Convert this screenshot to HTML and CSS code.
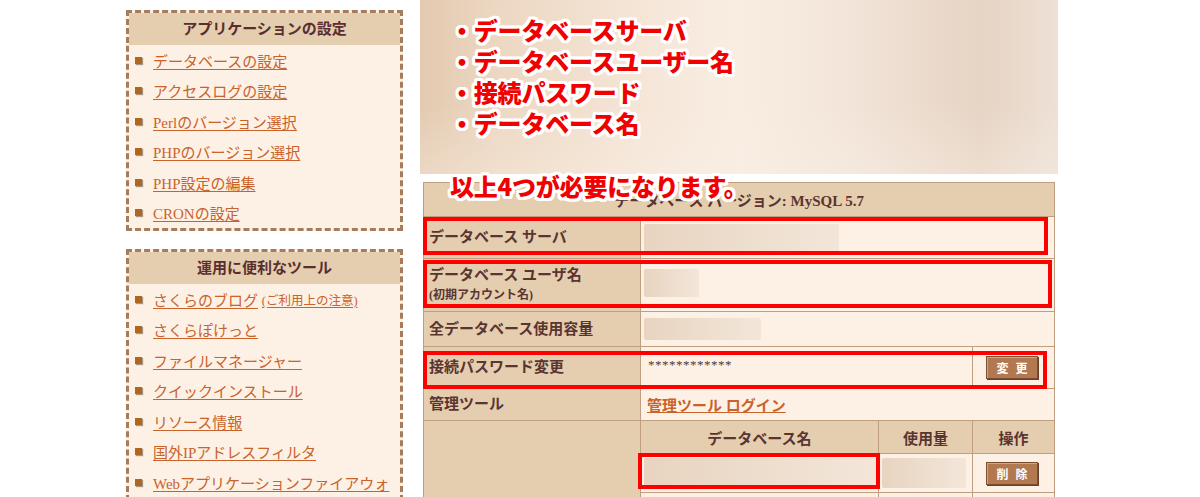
FILE: index.html
```html
<!DOCTYPE html>
<html lang="ja">
<head>
<meta charset="utf-8">
<title>データベース</title>
<link rel="stylesheet" href="styles.css">
</head>
<body>
<div class="page">
  <aside class="sidebar">
    <section class="panel">
      <h2 class="panel-head">アプリケーションの設定</h2>
      <ul class="menu">
        <li><a href="#">データベースの設定</a></li>
        <li><a href="#">アクセスログの設定</a></li>
        <li><a href="#">Perlのバージョン選択</a></li>
        <li><a href="#">PHPのバージョン選択</a></li>
        <li><a href="#">PHP設定の編集</a></li>
        <li><a href="#">CRONの設定</a></li>
      </ul>
    </section>
    <section class="panel">
      <h2 class="panel-head">運用に便利なツール</h2>
      <ul class="menu">
        <li><a href="#">さくらのブログ</a>&nbsp;<a href="#" class="small">(ご利用上の注意)</a></li>
        <li><a href="#">さくらぽけっと</a></li>
        <li><a href="#">ファイルマネージャー</a></li>
        <li><a href="#">クイックインストール</a></li>
        <li><a href="#">リソース情報</a></li>
        <li><a href="#">国外IPアドレスフィルタ</a></li>
        <li><a href="#">Webアプリケーションファイアウォ</a></li>
      </ul>
    </section>
  </aside>

  <main class="main">
    <div class="hero">
      <p class="note">・データベースサーバ</p>
      <p class="note">・データベースユーザー名</p>
      <p class="note">・接続パスワード</p>
      <p class="note">・データベース名</p>
    </div>

    <div class="db-wrap">
      <table class="db">
        <colgroup>
          <col class="c1"><col class="c2"><col class="c3"><col class="c4">
        </colgroup>
        <tr class="r-head">
          <th colspan="4" class="head">データベース バージョン: MySQL 5.7</th>
        </tr>
        <tr class="r1">
          <th class="label">データベース サーバ</th>
          <td colspan="3" class="val"><div class="blur b1"></div></td>
        </tr>
        <tr class="r2">
          <th class="label">データベース ユーザ名<br><span class="sub">(初期アカウント名)</span></th>
          <td colspan="3" class="val"><div class="blur b2"></div></td>
        </tr>
        <tr class="r3">
          <th class="label">全データベース使用容量</th>
          <td colspan="3" class="val"><div class="blur b3"></div></td>
        </tr>
        <tr class="r4">
          <th class="label">接続パスワード変更</th>
          <td colspan="2" class="val pw">************</td>
          <td class="val center"><span class="btn">変更</span></td>
        </tr>
        <tr class="r5">
          <th class="label">管理ツール</th>
          <td colspan="3" class="val"><a href="#" class="tool-link">管理ツール ログイン</a></td>
        </tr>
        <tr class="r6">
          <th class="label" rowspan="3"></th>
          <th class="sub-head">データベース名</th>
          <th class="sub-head">使用量</th>
          <th class="sub-head">操作</th>
        </tr>
        <tr class="r7">
          <td class="val"><div class="blur b4"></div></td>
          <td class="val"><div class="blur b5"></div></td>
          <td class="val center"><span class="btn">削除</span></td>
        </tr>
        <tr class="r8">
          <td class="val"></td>
          <td class="val"></td>
          <td class="val"></td>
        </tr>
      </table>

      <div class="mark m1"></div>
      <div class="mark m2"></div>
      <div class="mark m3"></div>
      <div class="mark m4"></div>
      <p class="caption">以上4つが必要になります。</p>
    </div>
  </main>
</div>
</body>
</html>
```

FILE: styles.css
```css
* { box-sizing: border-box; }

html, body {
  margin: 0;
  padding: 0;
  background: #ffffff;
  overflow: hidden;
}

body {
  font-family: "Liberation Serif", "Noto Sans CJK JP", serif;
  color: #5a3530;
  height: 497px;
}

.page {
  display: flex;
  align-items: flex-start;
  gap: 17px;
  padding-left: 126px;
}

/* ---------- sidebar ---------- */
.sidebar {
  width: 277px;
  flex: none;
  padding-top: 10px;
  display: flex;
  flex-direction: column;
  gap: 18px;
}

.panel {
  border: 3px dashed #a57d5d;
  background: #fdf1e5;
}

.panel-head {
  margin: 0;
  height: 32px;
  line-height: 32px;
  background: #e5cdb0;
  text-align: center;
  font-size: 15px;
  font-weight: bold;
  color: #5b2e2e;
}

.menu {
  list-style: none;
  margin: 0;
  padding: 0 0 0 6px;
}

.menu li {
  height: 30.5px;
  display: flex;
  align-items: center;
  font-size: 15px;
  white-space: nowrap;
}

.menu li::before {
  content: "";
  width: 7px;
  height: 7px;
  background: #b0661c;
  box-shadow: 1px 1px 1px rgba(60, 40, 20, 0.45);
  margin-right: 11px;
  flex: none;
}

.menu a {
  color: #c9622b;
  text-decoration: underline;
  text-underline-offset: 2px;
}

.menu a.small {
  font-size: 12.5px;
}

/* ---------- main ---------- */
.main {
  width: 638px;
  flex: none;
}

.hero {
  height: 174px;
  padding: 14px 0 0 30px;
  background:
    linear-gradient(180deg, rgba(255,255,255,0) 60%, rgba(250,240,230,0.35) 100%),
    linear-gradient(90deg, #e3cab0 0%, #ecd7c2 12%, #f5e6d8 35%, #f9ede2 50%, #f2e4d8 68%, #e6d4c4 88%, #ede0d5 100%);
}

.note {
  margin: 0;
  font-family: "Noto Sans CJK JP", sans-serif;
  font-weight: 900;
  font-size: 24px;
  line-height: 31px;
  color: #f00000;
  letter-spacing: -0.2px;
  text-shadow:
    3px 0 0 #fff, -3px 0 0 #fff, 0 3px 0 #fff, 0 -3px 0 #fff,
    2px 2px 0 #fff, -2px 2px 0 #fff, 2px -2px 0 #fff, -2px -2px 0 #fff,
    3px 2px 0 #fff, -3px 2px 0 #fff, 3px -2px 0 #fff, -3px -2px 0 #fff,
    2px 3px 0 #fff, -2px 3px 0 #fff, 2px -3px 0 #fff, -2px -3px 0 #fff;
}

.db-wrap {
  position: relative;
  margin: 8px 4px 0 3px;
}

.db {
  width: 631px;
  border-collapse: collapse;
  table-layout: fixed;
  border: 1px solid #a88767;
  font-size: 15px;
}

.c1 { width: 217px; }
.c2 { width: 238px; }
.c3 { width: 94px; }
.c4 { width: 82px; }

.db th, .db td {
  border: 1px solid #bf9f80;
  padding: 0;
  vertical-align: middle;
}

.head {
  background: #e5cdb0;
  height: 34px;
  text-align: center;
  font-weight: bold;
  color: #5a3530;
}

.label {
  background: #e5cdb0;
  text-align: left;
  padding: 0 5px !important;
  font-weight: 600;
  color: #5a3530;
  line-height: 19px;
}

.label .sub {
  font-size: 12px;
  font-weight: 600;
}

.val {
  background: #fdf1e5;
  padding: 0 3px !important;
}

.center { text-align: center; }

.r1 { height: 42px; }
.r2 { height: 53px; }
.r3 { height: 35px; }
.r4 { height: 42px; }
.r5 { height: 32px; }
.r6 { height: 33px; }
.r7 { height: 39px; }
.r8 { height: 30px; }

.sub-head {
  background: #e5cdb0;
  text-align: center;
  font-weight: bold;
  color: #5a3530;
}

.pw {
  font-size: 13px;
  padding: 0 7px 6px !important;
  color: #4e3a34;
  letter-spacing: 0.5px;
}

.tool-link {
  color: #c9622b;
  font-weight: 600;
  text-decoration: underline;
  padding-left: 3px;
}

.blur {
  background: linear-gradient(90deg, #e8d4c0 0%, #eedfcf 60%, #f3e6d9 100%);
  border-radius: 2px;
}
.b1 { width: 195px; height: 28px; }
.b2 { width: 55px; height: 28px; margin-top: -4px; }
.b3 { width: 117px; height: 22px; }
.b4 { width: 233px; height: 30px; }
.b5 { width: 84px; height: 30px; }

.btn {
  display: inline-block;
  width: 52px;
  height: 23px;
  line-height: 21px;
  margin-right: 3px;
  background: #b27950;
  border: 1px solid #7b4d2e;
  box-shadow: inset 1px 1px 0 #d4a47c, 1px 1px 0 #6a4229;
  color: #ffffff;
  font-family: "Noto Sans CJK JP", sans-serif;
  font-size: 12px;
  font-weight: bold;
  letter-spacing: 7px;
  text-indent: 7px;
  text-align: center;
}

/* ---------- annotations ---------- */
.mark {
  position: absolute;
  border: 4px solid #ff0000;
}
.m1 { left: 0; top: 35px; width: 625px; height: 38px; }
.m2 { left: 0; top: 78px; width: 629px; height: 48px; }
.m3 { left: 0; top: 169px; width: 624px; height: 38px; }
.m4 { left: 215px; top: 271px; width: 242px; height: 36px; }

.caption {
  position: absolute;
  left: 27px;
  top: -11px;
  margin: 0;
  font-family: "Noto Sans CJK JP", sans-serif;
  font-weight: 900;
  font-size: 24px;
  line-height: 30px;
  color: #f00000;
  letter-spacing: -0.2px;
  text-shadow:
    3px 0 0 #fff, -3px 0 0 #fff, 0 3px 0 #fff, 0 -3px 0 #fff,
    2px 2px 0 #fff, -2px 2px 0 #fff, 2px -2px 0 #fff, -2px -2px 0 #fff,
    3px 2px 0 #fff, -3px 2px 0 #fff, 3px -2px 0 #fff, -3px -2px 0 #fff,
    2px 3px 0 #fff, -2px 3px 0 #fff, 2px -3px 0 #fff, -2px -3px 0 #fff;
}
```
